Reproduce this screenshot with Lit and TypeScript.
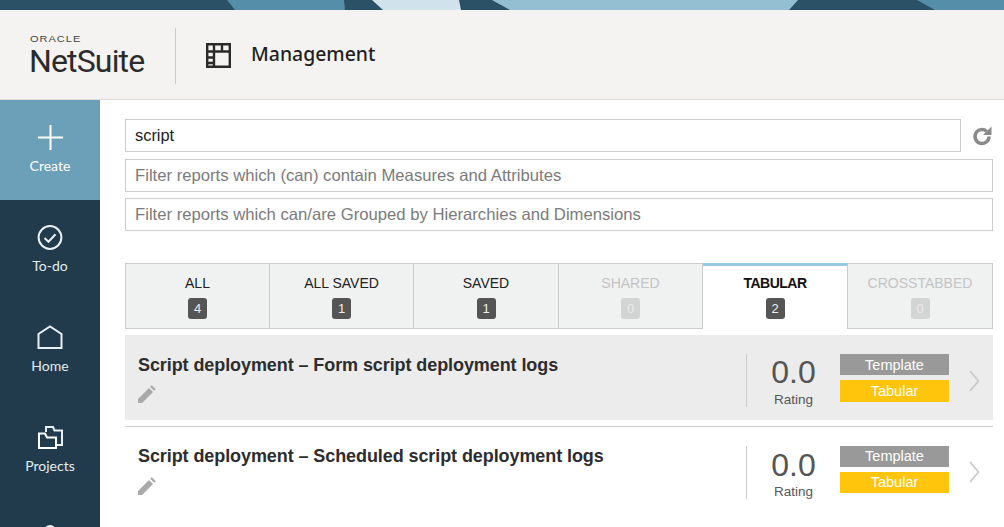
import { LitElement, html, css, svg } from "lit";
import { customElement } from "lit/decorators.js";

const tabs = [
  { label: "ALL", n: 4 },
  { label: "ALL SAVED", n: 1 },
  { label: "SAVED", n: 1 },
  { label: "SHARED", n: 0, off: true },
  { label: "TABULAR", n: 2, active: true },
  { label: "CROSSTABBED", n: 0, off: true },
];

const nav = [
  { label: "To-do", icon: svg`<circle cx="13" cy="12.500" r="11.400" fill="none" stroke="#e8f0f4" stroke-width="2"/><path d="M7.500 13l4 3.800 7-7.600" fill="none" stroke="#e8f0f4" stroke-width="2"/>` },
  { label: "Home", icon: svg`<path d="M1.500 23V9L13 1.500 24.500 9V23z" fill="none" stroke="#e8f0f4" stroke-width="2"/>` },
  { label: "Projects", icon: svg`<path d="M9 7V2h7l1.500 3.500H25V20H19" fill="none" stroke="#e8f0f4" stroke-width="2"/><path d="M2 23V8.500h6l2 4h9V23z" fill="#213a4c" stroke="#fff" stroke-width="2"/>` },
  { label: "", icon: svg`<circle cx="13" cy="6" r="5" fill="none" stroke="#e8f0f4" stroke-width="2"/>` },
];

@customElement("app-root")
export class AppRoot extends LitElement {
  static styles = css`
    :host { display: block; width: 1004px; height: 527px; overflow: hidden; background: #fff; font-family: "Liberation Sans", Arial, sans-serif; }
    .banner { display: block; width: 1004px; height: 10px; }
    .header { box-sizing: border-box; height: 90px; padding-top: 2px; background: #f4f3f1; border-bottom: 1px solid #dedbd6; display: flex; align-items: center; }
    .logo { width: 176px; height: 56px; box-sizing: border-box; padding-left: 30px; border-right: 1px solid #cfccc8; display: flex; flex-direction: column; justify-content: center; flex: none; }
    .oracle { font: 400 8.500px/8px "Liberation Sans", sans-serif; letter-spacing: 0.750px; transform: scaleX(1.3); transform-origin: left; color: #444; margin-top: 0; }
    .netsuite { font: 400 32px/32px Roboto, sans-serif; letter-spacing: -0.850px; color: #2b2b2b; margin-left: -1px; margin-top: 2px; }
    .grid-ic { margin-left: 30px; width: 25px; height: 25px; flex: none; }
    .title { margin-left: 20px; font: 500 19.400px/26px "Noto Sans", sans-serif; color: #1f1f1f; margin-top: -4px; }
    .body { display: flex; height: 428px; overflow: hidden; }
    .side { width: 100px; flex: none; background: #213a4c; display: flex; flex-direction: column; }
    .nav { height: 100px; flex: none; display: flex; flex-direction: column; align-items: center; padding-top: 25px; box-sizing: border-box; color: #e3edf2; font: 400 14px/20px Lato, sans-serif; gap: 5px; }
    .nav svg { width: 26px; height: 26px; flex: none; }
    .nav.create { background: #6ba0b8; color: #fff; }
    .main { flex: 1; min-width: 0; padding: 19px 11px 0 25px; }
    .search-row { display: flex; align-items: center; gap: 11px; }
    .inp { box-sizing: border-box; height: 33px; border: 1px solid #ccc; display: flex; align-items: center; padding-left: 9px; font-size: 16.680px; color: #7b7b7b; background: #fff; }
    .search-row .inp { flex: 1; color: #222; font-size: 16.400px; }
    .refresh { width: 21px; height: 21px; flex: none; }
    .inp.f1 { margin-top: 7px; }
    .inp.f2 { margin-top: 6px; }
    .tabs { display: grid; grid-template-columns: 145px 144px 145px 144px 145px 145px; margin-top: 32px; height: 66px; box-sizing: border-box; }
    .tab { box-sizing: border-box; border: 1px solid #ccc; border-left-width: 0; background: #f0f1f1; display: flex; flex-direction: column; align-items: center; padding-top: 10px; font-size: 14px; line-height: 18px; color: #222; }
    .tab:first-child { border-left-width: 1px; }
    .tab.off { color: #c4c4c4; }
    .tab.active { background: #fff; border-top: 3px solid #98c9e4; border-bottom: 0; padding-top: 8px; font-weight: 700; color: #111; letter-spacing: -0.500px; }
    .badge { margin-top: 6px; min-width: 19px; height: 21px; box-sizing: border-box; padding: 0 5px; border-radius: 3px; background: #555; color: #eee; font-size: 13px; line-height: 21px; text-align: center; letter-spacing: 0; font-weight: 400; }
    .off .badge { background: #d3d4d4; color: #ebebeb; }
    .row { display: flex; height: 85px; box-sizing: border-box; align-items: flex-start; margin-top: 6px; }
    .row.hl { background: #ececec; }
    .row.plain { height: 92px; border-top: 1px solid #ccc; }
    .left { flex: 1; min-width: 0; padding: 19px 0 0 13px; }
    .name { font-size: 18px; font-weight: 700; line-height: 22px; color: #2d2d2d; letter-spacing: -0.085px; }
    .pencil { display: block; width: 18px; height: 18px; margin-top: 9px; }
    .rate { width: 94px; height: 53px; margin-top: 19px; flex: none; border-left: 1px solid #ccc; display: flex; flex-direction: column; align-items: center; color: #555; box-sizing: border-box; }
    .num { font-size: 32px; line-height: 36px; }
    .lab { font-size: 13.500px; line-height: 17px; margin-top: 1px; }
    .plain .lab { margin-top: 0; }
    .plain .num { margin-top: 1px; }
    .tags { width: 109px; flex: none; margin-top: 19px; display: flex; flex-direction: column; gap: 5px; color: #fff; font-size: 14.500px; text-align: center; }
    .tag { height: 21px; line-height: 22px; background: #999; }
    .tag.y { background: #ffc40c; height: 22px; line-height: 23px; }
    .chev { width: 44px; flex: none; height: 85px; box-sizing: border-box; padding: 7px 0 0 20px; display: flex; align-items: center; }
    .chev svg { width: 12px; height: 22px; }
    .plain .left { padding-top: 18px; }
    .plain .pencil { margin-top: 10px; }
    .plain .tag { line-height: 21px; }
    .plain .tag.y { height: 21px; line-height: 21px; }
    .plain .chev { height: 90px; padding-top: 0; }
  `;

  private row(name: string, cls: string) {
    return html`<div class="row ${cls}">
      <div class="left">
        <div class="name">${name}</div>
        <svg class="pencil" viewBox="0 0 18 18"><path d="M0 18v-4L11 3l4 4L4 18zM12.200 1.800l1.600-1.600 4 4-1.600 1.600z" fill="#a9a9a9"/></svg>
      </div>
      <div class="rate"><div class="num">0.0</div><div class="lab">Rating</div></div>
      <div class="tags"><div class="tag">Template</div><div class="tag y">Tabular</div></div>
      <div class="chev"><svg viewBox="0 0 12 22"><path d="M1 1L9.500 11 1 21" fill="none" stroke="#c8c8c8" stroke-width="1.700"/></svg></div>
    </div>`;
  }

  render() {
    return html`
      <svg class="banner" viewBox="0 0 1004 10">
        <rect width="1004" height="10" fill="#2b5166"/>
        <path d="M227 0L235 10H345L344 0z" fill="#558ea8"/>
        <path d="M372 0L383 10H461L459 0z" fill="#d0e3ec"/>
        <path d="M492 0L510 10H789L798 0z" fill="#94bfd2"/>
        <path d="M917 0L935 10H1004V0z" fill="#558ea8"/>
      </svg>
      <div class="header">
        <div class="logo">
          <div class="oracle">ORACLE</div>
          <div class="netsuite">NetSuite</div>
        </div>
        <svg class="grid-ic" viewBox="0 0 25 25"><path d="M1.200 1.200h22.600v22.600H1.200zM1 8.500h23M8 1v23M16 1v7.500M1 14.500h7M1 20h7" fill="none" stroke="#2a2a2a" stroke-width="2.400"/></svg>
        <div class="title">Management</div>
      </div>
      <div class="body">
        <div class="side">
          <div class="nav create">
            <svg viewBox="0 0 26 26"><path d="M13.500 0v25M1 12.500h25" stroke="#fff" stroke-width="2" fill="none"/></svg>
            Create
          </div>
          ${nav.map((n) => html`<div class="nav"><svg viewBox="0 0 26 26">${n.icon}</svg>${n.label}</div>`)}
        </div>
        <div class="main">
          <div class="search-row">
            <div class="inp">script</div>
            <svg class="refresh" viewBox="0 0 21 21"><path d="M17 11.500a7 7 0 1 1-2.200-5.100" fill="none" stroke="#8a8a8a" stroke-width="3.400"/><path d="M19.500 1.500V10H11z" fill="#8a8a8a"/></svg>
          </div>
          <div class="inp f1">Filter reports which (can) contain Measures and Attributes</div>
          <div class="inp f2">Filter reports which can/are Grouped by Hierarchies and Dimensions</div>
          <div class="tabs">
            ${tabs.map((t) => html`<div class="tab ${t.off ? "off" : ""} ${t.active ? "active" : ""}">${t.label}<div class="badge">${t.n}</div></div>`)}
          </div>
          ${this.row("Script deployment – Form script deployment logs", "hl")}
          ${this.row("Script deployment – Scheduled script deployment logs", "plain")}
        </div>
      </div>
    `;
  }
}
